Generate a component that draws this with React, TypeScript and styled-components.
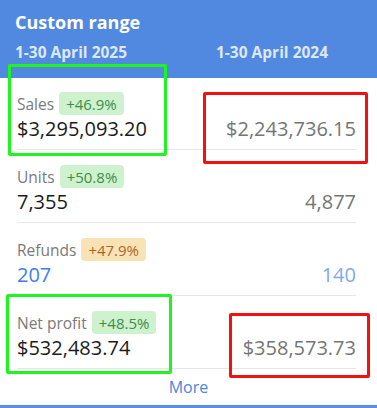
import React from 'react';
import styled, { createGlobalStyle } from 'styled-components';

const GlobalStyle = createGlobalStyle`
  body {
    margin: 0;
    background: #ffffff;
    font-family: 'Open Sans', 'Liberation Sans', sans-serif;
  }
`;

const Card = styled.div`
  position: relative;
  width: 377px;
  height: 408px;
  background: #ffffff;
  overflow: hidden;
  display: flex;
  flex-direction: column;
`;

const Header = styled.div`
  flex: 0 0 78px;
  background: #5189e0;
  box-sizing: border-box;
  padding: 8px 15px 15px;
`;

const Title = styled.div`
  color: #ffffff;
  font-size: 18px;
  font-weight: 700;
  line-height: 28px;
`;

const Dates = styled.div`
  display: grid;
  grid-template-columns: 201px 1fr;
  margin-top: 5px;
  color: #dde7f8;
  font-size: 15.5px;
  font-weight: 700;
  line-height: 22px;
`;

const Body = styled.div`
  flex-shrink: 0;
  padding: 0 21px 0 17px;
`;

const Row = styled.div<{ $first?: boolean }>`
  display: flex;
  justify-content: space-between;
  align-items: flex-end;
  height: ${(p) => (p.$first ? 72 : 73)}px;
  box-sizing: border-box;
  padding-bottom: 7px;
  border-bottom: 1px solid #e6e6e6;
`;

const Left = styled.div`
  display: flex;
  flex-direction: column;
`;

const LabelLine = styled.div`
  display: flex;
  align-items: center;
  gap: 5px;
  height: 23px;
`;

const Label = styled.span`
  color: #7a7a7a;
  font-size: 15.5px;
`;

const Badge = styled.span<{ $tone: 'up' | 'warn' }>`
  display: inline-flex;
  align-items: center;
  height: 23px;
  padding: 0 7px;
  border-radius: 4px;
  font-size: 15px;
  background: ${(p) => (p.$tone === 'up' ? '#cdf2cd' : '#f9e3b6')};
  color: ${(p) => (p.$tone === 'up' ? '#3f8c50' : '#ad6428')};
`;

const Value = styled.div<{ $tone?: 'dark' | 'gray' | 'blue' | 'lightblue' }>`
  font-size: 20px;
  line-height: 26px;
  margin-top: 1px;
  color: ${(p) =>
    p.$tone === 'gray'
      ? '#757575'
      : p.$tone === 'blue'
      ? '#3b7fe4'
      : p.$tone === 'lightblue'
      ? '#80aaee'
      : '#1b1b1b'};
`;

const More = styled.div`
  text-align: center;
  color: #4a86e8;
  font-size: 16px;
  line-height: 36px;
`;

const BottomBar = styled.div`
  margin-top: auto;
  flex-shrink: 0;
  height: 3px;
  background: #5a8fe2;
`;

const Mark = styled.div<{ $color: string }>`
  position: absolute;
  box-sizing: border-box;
  border: 3px solid ${(p) => p.$color};
  border-radius: 2px;
  pointer-events: none;
`;

type Metric = {
  label: string;
  change: string;
  tone: 'up' | 'warn';
  current: string;
  previous: string;
  blue?: boolean;
};

const metrics: Metric[] = [
  { label: 'Sales', change: '+46.9%', tone: 'up', current: '$3,295,093.20', previous: '$2,243,736.15' },
  { label: 'Units', change: '+50.8%', tone: 'up', current: '7,355', previous: '4,877' },
  { label: 'Refunds', change: '+47.9%', tone: 'warn', current: '207', previous: '140', blue: true },
  { label: 'Net profit', change: '+48.5%', tone: 'up', current: '$532,483.74', previous: '$358,573.73' },
];

// annotation boxes drawn over the screenshot
const marks = [
  { color: '#1ef51e', left: 8, top: 64, width: 159, height: 92 },
  { color: '#f50f0f', left: 203, top: 92, width: 165, height: 72 },
  { color: '#1ef51e', left: 6, top: 294, width: 166, height: 80 },
  { color: '#f50f0f', left: 229, top: 313, width: 141, height: 65 },
];

export default function App() {
  return (
    <>
      <GlobalStyle />
      <Card>
        <Header>
          <Title>Custom range</Title>
          <Dates>
            <span>1-30 April 2025</span>
            <span>1-30 April 2024</span>
          </Dates>
        </Header>
        <Body>
          {metrics.map((m, i) => (
            <Row key={m.label} $first={i === 0}>
              <Left>
                <LabelLine>
                  <Label>{m.label}</Label>
                  <Badge $tone={m.tone}>{m.change}</Badge>
                </LabelLine>
                <Value $tone={m.blue ? 'blue' : 'dark'}>{m.current}</Value>
              </Left>
              <Value $tone={m.blue ? 'lightblue' : 'gray'}>{m.previous}</Value>
            </Row>
          ))}
        </Body>
        <More>More</More>
        <BottomBar />
        {marks.map((k, i) => (
          <Mark
            key={i}
            $color={k.color}
            style={{ left: k.left, top: k.top, width: k.width, height: k.height }}
          />
        ))}
      </Card>
    </>
  );
}
